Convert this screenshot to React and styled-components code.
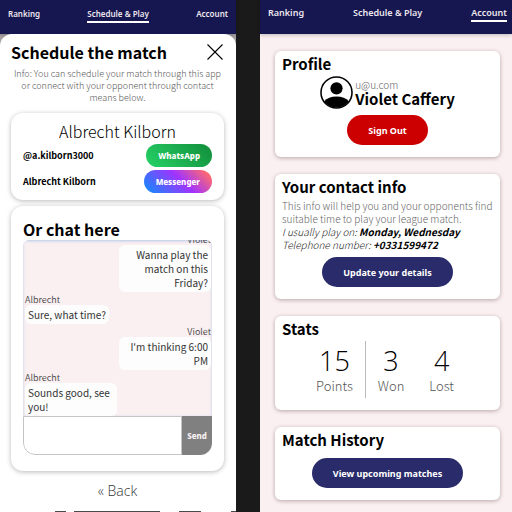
import React from "react";
import styled, { createGlobalStyle, css } from "styled-components";

const body = `"Noto Sans CJK JP", "Noto Sans", sans-serif`;
const ui = `"Noto Sans", "Open Sans", sans-serif`;

const GlobalStyle = createGlobalStyle`
  *, *::before, *::after { box-sizing: border-box; }
  body { margin: 0; background: #1a1a1a; font-family: ${body}; color: #000; }
  h1, h2, h3, p, dl, dd, dt { margin: 0; }
  button, input { font: inherit; border: 0; margin: 0; padding: 0; }
  button { cursor: pointer; }
`;

const Screens = styled.div`
  display: grid;
  grid-template-columns: 236fr 252fr;
  column-gap: 24px;
  height: 100vh;
  overflow: hidden;
`;

const Screen = styled.div`
  display: flex;
  flex-direction: column;
  min-width: 0;
  background: ${(p) => (p.$dimmed ? "#a9a3a4" : "#faf0f2")};
`;

const NavBar = styled.nav`
  display: flex;
  flex: none;
  justify-content: space-between;
  align-items: flex-start;
  height: 34px;
  padding: ${(p) => (p.$small ? "8px 8px 0" : "7px 5px 0 8px")};
  background: #161650;
  font-family: ${ui};
  font-size: ${(p) => (p.$small ? 8 : 9)}px;
  font-weight: 600;
  line-height: 12px;
  box-shadow: 0 1px 4px rgba(0, 0, 0, 0.25);
`;

const NavLink = styled.a`
  color: #ece6ee;
  text-decoration: none;
  padding-bottom: 1px;
  border-bottom: 2px solid ${(p) => (p.$active ? "#fff" : "transparent")};
`;

const Sheet = styled.main`
  flex: 1;
  display: flex;
  flex-direction: column;
  padding: 8px 12px 0 11px;
  border-radius: 12px 12px 0 0;
  background: #fff;
`;

const SheetHeader = styled.header`
  display: flex;
  justify-content: space-between;
  align-items: center;
`;

const SheetTitle = styled.h1`
  font-size: 16px;
  line-height: 20px;
  font-weight: 700;
`;

const CloseButton = styled.button`
  display: flex;
  margin-right: 1px;
  background: none;
`;

const Info = styled.p`
  margin: 6px 0 9px;
  color: #555;
  font-size: 9px;
  font-weight: 300;
  line-height: 12px;
  text-align: center;
`;

const SoftCard = styled.section`
  padding: ${(p) => (p.$tall ? "13px 12px 16px" : "7px 12px")};
  border-radius: 12px;
  background: #fff;
  box-shadow: 0 1px 5px rgba(0, 0, 0, 0.28);
  & + & { margin-top: 6px; }
`;

const Opponent = styled.h2`
  margin-bottom: 2px;
  font-size: 16px;
  line-height: 22px;
  font-weight: 300;
  text-align: center;
`;

const ContactRow = styled.div`
  display: flex;
  justify-content: space-between;
  align-items: center;
  font-size: 9px;
  font-weight: 700;
  line-height: 12px;
  & + & { margin-top: 3px; }
`;

const brands = {
  whatsapp: "linear-gradient(45deg, #25d366, #128c3a)",
  messenger: "linear-gradient(45deg, #0a90ff, #a033ff 55%, #ff6a70 92%)",
};

const BrandButton = styled.button`
  height: 23px;
  padding: 0 12px;
  border-radius: 12px;
  background: ${(p) => brands[p.$brand]};
  color: #fff;
  font-family: ${ui};
  font-size: 8px;
  font-weight: 800;
`;

const Heading = styled.h2`
  font-size: ${(p) => (p.$large ? 16 : 15)}px;
  line-height: 20px;
  font-weight: 700;
`;

const Chat = styled.div`
  margin-top: 1px;
  border-radius: 6px 6px 12px 12px;
  overflow: hidden;
`;

const Messages = styled.div`
  display: flex;
  flex-direction: column;
  justify-content: flex-end;
  height: 176px;
  padding: 0 1px 0 2px;
  overflow: hidden;
  background: #faf0f2;
  box-shadow: inset 0 1px 3px #b4c8e6;
`;

const Message = styled.div`
  display: flex;
  flex: none;
  flex-direction: column;
  align-items: ${(p) => (p.$own ? "flex-end" : "flex-start")};
  text-align: ${(p) => (p.$own ? "right" : "left")};
`;

const Author = styled.span`
  padding-top: 3px;
  color: #444;
  font-size: 9px;
  font-weight: 350;
  line-height: 10px;
`;

const Bubble = styled.p`
  max-width: 92px;
  padding: 3px 3px 2px;
  border-radius: 6px;
  background: #fdfdfd;
  color: #333;
  font-size: 10px;
  font-weight: 400;
  line-height: 14px;
`;

const Composer = styled.form`
  display: flex;
  height: 39px;
`;

const MessageInput = styled.input`
  flex: 1;
  min-width: 0;
  padding: 0 6px;
  border: 1px solid #c4c4c4;
  border-radius: 0 0 0 12px;
  background: #fff;
  font-size: 10px;
`;

const SendButton = styled.button`
  width: 30px;
  background: #808080;
  color: #f6f0f2;
  font-family: ${ui};
  font-size: 8px;
  font-weight: 800;
`;

const BackLink = styled.a`
  align-self: center;
  margin-top: 10px;
  color: #333;
  font-family: "Open Sans", sans-serif;
  font-size: 14px;
  font-weight: 300;
  line-height: 20px;
  text-decoration: none;
`;

const Edge = styled.svg`
  display: block;
  width: calc(100% + 23px);
  height: 1px;
  margin: auto -12px 0 -11px;
`;

const Account = styled.main`
  display: flex;
  flex-direction: column;
  gap: 17px;
  padding: 17px 12px 12px 15px;
`;

const Card = styled.section`
  display: flex;
  flex-direction: column;
  padding: 3px 7px 12px;
  border-radius: 6px;
  background: #fff;
  box-shadow: 0 1px 4px rgba(60, 20, 30, 0.35);
  ${Heading} { margin-bottom: 2px; }
`;

const Profile = styled.div`
  display: flex;
  justify-content: center;
  gap: 2px;
`;

const Email = styled.p`
  margin-top: 3px;
  color: #666;
  font-size: 10px;
  font-weight: 300;
  line-height: 12px;
`;

const Name = styled.p`
  font-size: 15px;
  font-weight: 700;
  line-height: 16px;
`;

const PillButton = styled.button`
  align-self: center;
  height: 30px;
  margin-top: 6px;
  padding: 0 21px;
  border-radius: 15px;
  background: ${(p) => (p.$danger ? "#cc0000" : "#292b6a")};
  color: #fff;
  font-family: ${ui};
  font-size: 9px;
  font-weight: 700;
`;

const Detail = styled.p`
  color: #666;
  font-size: 10px;
  font-weight: 300;
  line-height: 13px;
  ${(p) => p.$italic && css`
    color: #222;
    font-style: italic;
  `}
  b { font-weight: 700; color: #000; }
`;

const Stats = styled.dl`
  display: flex;
  justify-content: center;
  padding-right: 4px;
`;

const Stat = styled.div`
  display: flex;
  flex-direction: column-reverse;
  justify-content: center;
  height: 57px;
  padding: 0 12px;
  text-align: center;
  border-right: 1px solid ${(p) => (p.$divided ? "#bbb" : "transparent")};
  dt { color: #555; font-size: 13px; font-weight: 300; line-height: 17px; }
  dd { font-family: "Open Sans", sans-serif; font-size: 27px; font-weight: 300; line-height: 32px; }
`;

function Nav({ active, small }) {
  return (
    <NavBar $small={small}>
      {["Ranking", "Schedule & Play", "Account"].map((label) => (
        <NavLink key={label} href="#" $active={label === active}>{label}</NavLink>
      ))}
    </NavBar>
  );
}

const messages = [
  { author: "Violet", own: true, text: "Wanna play the match on this Friday?" },
  { author: "Albrecht", text: "Sure, what time?" },
  { author: "Violet", own: true, text: "I'm thinking 6:00 PM" },
  { author: "Albrecht", text: "Sounds good, see you!" },
];

const stats = [
  { label: "Points", value: 15, divided: true },
  { label: "Won", value: 3 },
  { label: "Lost", value: 4 },
];

function ScheduleScreen() {
  return (
    <Screen $dimmed>
      <Nav active="Schedule & Play" small />
      <Sheet>
        <SheetHeader>
          <SheetTitle>Schedule the match</SheetTitle>
          <CloseButton aria-label="Close">
            <svg width="16" height="16" viewBox="0 0 16 16" stroke="#000" strokeWidth="1.1">
              <path d="M0.5 0.5 15.5 15.5M15.5 0.5 0.5 15.5" />
            </svg>
          </CloseButton>
        </SheetHeader>
        <Info>
          Info: You can schedule your match through this app or connect with your opponent through contact means below.
        </Info>
        <SoftCard>
          <Opponent>Albrecht Kilborn</Opponent>
          <ContactRow>
            <span>@a.kilborn3000</span>
            <BrandButton $brand="whatsapp">WhatsApp</BrandButton>
          </ContactRow>
          <ContactRow>
            <span>Albrecht Kilborn</span>
            <BrandButton $brand="messenger">Messenger</BrandButton>
          </ContactRow>
        </SoftCard>
        <SoftCard $tall>
          <Heading $large>Or chat here</Heading>
          <Chat>
            <Messages>
              {messages.map((m) => (
                <Message key={m.text} $own={m.own}>
                  <Author>{m.author}</Author>
                  <Bubble>{m.text}</Bubble>
                </Message>
              ))}
            </Messages>
            <Composer onSubmit={(e) => e.preventDefault()}>
              <MessageInput aria-label="Message" />
              <SendButton>Send</SendButton>
            </Composer>
          </Chat>
        </SoftCard>
        <BackLink href="#">« Back</BackLink>
        <Edge viewBox="0 0 236 1" preserveAspectRatio="none" fill="#4a4a4a" aria-hidden="true">
          <path d="M55 0h11v1H55zM74 0h86v1H74zM179 0h22v1h-22zM231 0h5v1h-5z" />
        </Edge>
      </Sheet>
    </Screen>
  );
}

function AccountScreen() {
  return (
    <Screen>
      <Nav active="Account" />
      <Account>
        <Card>
          <Heading>Profile</Heading>
          <Profile>
            <svg width="33" height="33" viewBox="0 0 34 34" aria-hidden="true">
              <circle cx="17" cy="17" r="16" fill="#fff" stroke="#000" strokeWidth="1.6" />
              <circle cx="17" cy="12.7" r="6.3" />
              <path d="M4.2 26C7 22.500 11.500 21 17 21s10 1.500 12.800 5A15.800 15.800 0 0 1 4.200 26z" />
            </svg>
            <div>
              <Email>u@u.com</Email>
              <Name>Violet Caffery</Name>
            </div>
          </Profile>
          <PillButton $danger>Sign Out</PillButton>
        </Card>
        <Card>
          <Heading>Your contact info</Heading>
          <Detail>This info will help you and your opponents find suitable time to play your league match.</Detail>
          <Detail $italic>I usually play on: <b>Monday, Wednesday</b></Detail>
          <Detail $italic>Telephone number: <b>+0331599472</b></Detail>
          <PillButton>Update your details</PillButton>
        </Card>
        <Card>
          <Heading>Stats</Heading>
          <Stats>
            {stats.map((s) => (
              <Stat key={s.label} $divided={s.divided}>
                <dt>{s.label}</dt>
                <dd>{s.value}</dd>
              </Stat>
            ))}
          </Stats>
        </Card>
        <Card>
          <Heading>Match History</Heading>
          <PillButton>View upcoming matches</PillButton>
        </Card>
      </Account>
    </Screen>
  );
}

export default function App() {
  return (
    <>
      <GlobalStyle />
      <Screens>
        <ScheduleScreen />
        <AccountScreen />
      </Screens>
    </>
  );
}
